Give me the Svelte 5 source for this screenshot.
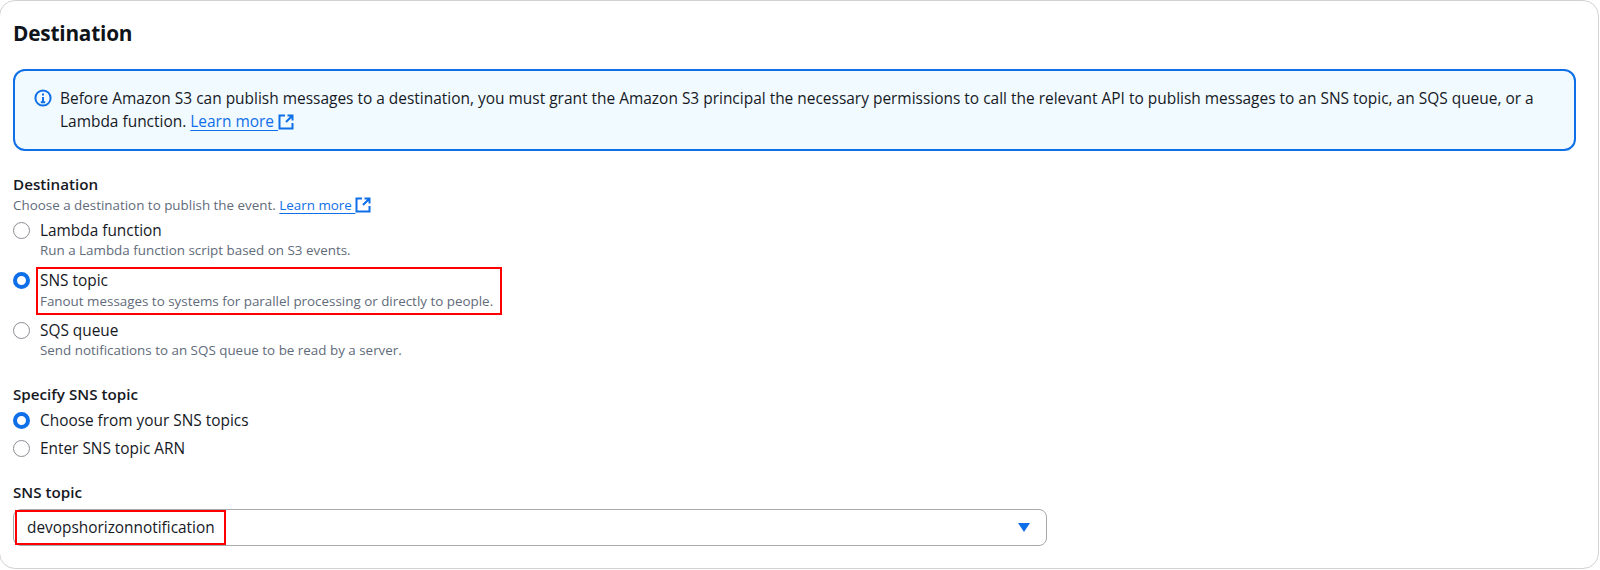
<script>
  const destinations = [
    { label: 'Lambda function', hint: 'Run a Lambda function script based on S3 events.', checked: false },
    { label: 'SNS topic', hint: 'Fanout messages to systems for parallel processing or directly to people.', checked: true, marked: true },
    { label: 'SQS queue', hint: 'Send notifications to an SQS queue to be read by a server.', checked: false }
  ];
  const topicSources = [
    { label: 'Choose from your SNS topics', checked: true },
    { label: 'Enter SNS topic ARN', checked: false }
  ];
</script>

{#snippet external()}
  <svg class="ext" viewBox="0 0 16 16" width="16" height="16" fill="none" stroke="#0f6fe8" stroke-width="2">
    <path d="M7 1.5H1.5v13h13V9" />
    <path d="M9.5 1.5h5v5M14.5 1.5 8 8" />
  </svg>
{/snippet}

<div class="page">
  <section class="card">
    <h2>Destination</h2>

    <div class="alert">
      <svg class="info" viewBox="0 0 18 18" width="18" height="18" fill="none" stroke="#0f6fe8" stroke-width="2">
        <circle cx="9" cy="9" r="7.6" />
        <path d="M9 8v5.2M6.8 13.2h4.4M9 4.6v2" />
      </svg>
      <p>
        Before Amazon S3 can publish messages to a destination, you must grant the Amazon S3 principal the necessary permissions to call the relevant API to publish messages to an SNS topic, an SQS queue, or a Lambda function.
        <a href="#top">Learn more&nbsp;</a>{@render external()}
      </p>
    </div>

    <div class="field first">
      <div class="label">Destination</div>
      <div class="desc">Choose a destination to publish the event. <a href="#top">Learn more&nbsp;</a>{@render external()}</div>
      <div class="group">
        {#each destinations as d}
          <div class="radio">
            <span class="dot" class:on={d.checked}></span>
            <div class="body" class:marked={d.marked}>
              <div class="name">{d.label}</div>
              <div class="hint">{d.hint}</div>
            </div>
          </div>
        {/each}
      </div>
    </div>

    <div class="field second">
      <div class="label">Specify SNS topic</div>
      <div class="group tight">
        {#each topicSources as s}
          <div class="radio">
            <span class="dot" class:on={s.checked}></span>
            <div class="body"><div class="name">{s.label}</div></div>
          </div>
        {/each}
      </div>
    </div>

    <div class="field third">
      <div class="label">SNS topic</div>
      <div class="select">
        <span class="value">devopshorizonnotification</span>
        <svg viewBox="0 0 12 9" width="12" height="9"><path d="M0 0h12L6 9z" fill="#0f6fe8" /></svg>
      </div>
    </div>
  </section>
</div>

<style>
  :global(body) {
    margin: 0;
    background: #fff;
  }

  .page {
    width: 1600px;
    height: 570px;
    overflow: hidden;
    font-family: "Open Sans", "Noto Sans", sans-serif;
    color: #16191f;
  }

  .card {
    box-sizing: border-box;
    width: 1600px;
    height: 569px;
    margin-left: -1px;
    padding: 19px 22px 0 13px;
    border: 1px solid #d0d2d6;
    border-radius: 16px;
  }

  h2 {
    margin: 0;
    font-size: 20.8px;
    line-height: 26px;
    font-weight: 700;
    color: #0f141a;
    letter-spacing: -0.2px;
  }

  .alert {
    display: flex;
    gap: 8px;
    box-sizing: border-box;
    height: 82px;
    margin-top: 23px;
    padding: 16px 12px 0 19px;
    background: #f1faff;
    border: 2px solid #0f6fe8;
    border-radius: 12px;
  }

  .info {
    flex: none;
    margin-top: 2px;
  }

  .alert p {
    margin: 0;
    font-size: 15.46px;
    line-height: 23px;
  }

  a {
    color: #0f6fe8;
    text-decoration: underline;
    text-underline-offset: 3px;
  }

  .ext {
    vertical-align: -3px;
  }

  .field.first {
    margin-top: 23px;
  }

  .field.second {
    margin-top: 24px;
  }

  .field.third {
    margin-top: 23px;
  }

  .label {
    font-size: 15.2px;
    line-height: 20px;
    font-weight: 600;
  }

  .desc {
    margin-top: 2px;
    font-size: 13.4px;
    line-height: 19px;
    color: #5f6b7a;
  }

  .group {
    display: flex;
    flex-direction: column;
    gap: 10px;
    margin-top: 5px;
  }

  .group.tight {
    gap: 7px;
    margin-top: 6.5px;
  }

  .radio {
    display: flex;
    gap: 10px;
  }

  .dot {
    flex: none;
    box-sizing: border-box;
    width: 17px;
    height: 17px;
    margin-top: 2px;
    border: 1px solid #8c8c94;
    border-radius: 50%;
    background: #fff;
  }

  .dot.on {
    border: 4.5px solid #0f6fe8;
  }

  .body.marked {
    box-sizing: border-box;
    width: 466px;
    height: 48px;
    margin: -3.5px 0 -5px -4px;
    padding: 1.5px 0 0 2px;
    border: 2px solid #f00;
  }

  .marked .hint {
    margin-top: 1px;
  }

  .name {
    font-size: 15.4px;
    line-height: 21px;
  }

  .hint {
    font-size: 13.4px;
    line-height: 19px;
    color: #5f6b7a;
    white-space: nowrap;
  }

  .select {
    display: flex;
    align-items: center;
    justify-content: space-between;
    box-sizing: border-box;
    width: 1034px;
    height: 37px;
    margin-top: 7px;
    padding: 0 16px 0 1px;
    border: 1px solid #a8a8ad;
    border-radius: 8px;
  }

  .value {
    box-sizing: border-box;
    width: 211px;
    height: 35px;
    padding: 0 10px;
    border: 2px solid #f00;
    font-size: 15.4px;
    line-height: 31px;
    white-space: nowrap;
  }
</style>
